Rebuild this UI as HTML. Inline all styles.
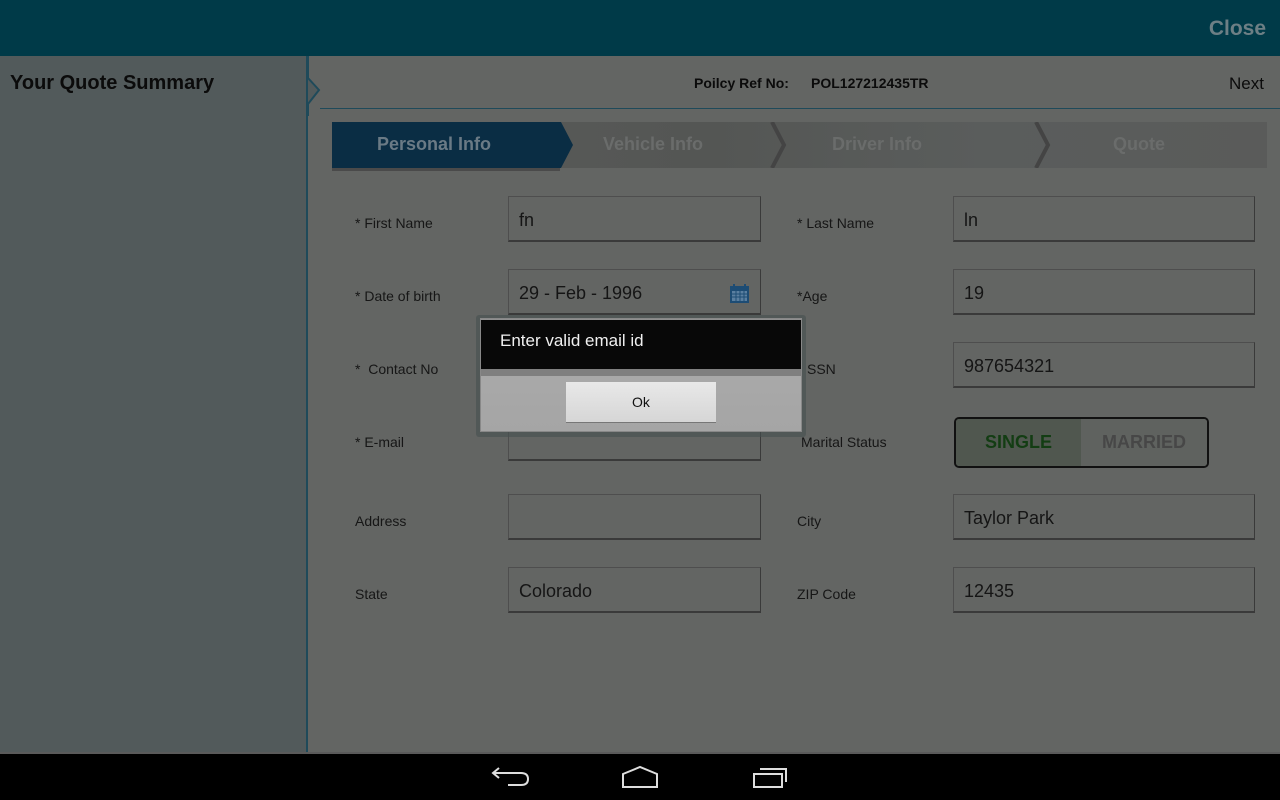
<!DOCTYPE html>
<html><head><style>
*{margin:0;padding:0;box-sizing:border-box}
body{width:1280px;height:800px;position:relative;overflow:hidden;background:#636563;font-family:"Liberation Sans",sans-serif;color:#111}
.a{position:absolute}
.top{left:0;top:0;width:1280px;height:56px;background:#003a48}
.close{right:14px;top:17px;color:#6d7f85;font-weight:bold;font-size:21px}
.left{left:0;top:56px;width:308px;height:696px;background:#525a5b;border-right:2px solid #1f4a5a}
.lbl{font-size:14px;color:#161616}
.in{width:253px;height:46px;border:1px solid #4e4e4e;border-right-color:#3a3a3a;border-bottom:2px solid #3a3a3a;font-size:18px;padding:13px 10px;color:#151515}
.r{width:302px}
.nav{left:0;top:752px;width:1280px;height:48px;background:#000}
</style></head><body>
<div class="a top"></div>
<div class="a close">Close</div>
<div class="a left"></div>
<div class="a" style="left:10px;top:72px;font-size:20px;font-weight:bold;color:#0b0b0b">Your Quote Summary</div>
<svg class="a" style="left:300px;top:56px" width="24" height="60"><path d="M8 0 V22 L19 34 L8 48 V60" fill="#525a5b" stroke="#1f4a5a" stroke-width="2"/></svg>
<div class="a" style="left:320px;top:108px;width:960px;height:1px;background:#1f4a5a"></div>
<div class="a" style="left:694px;top:75px;font-size:14px;font-weight:bold;color:#0b0b0b">Poilcy Ref No:</div>
<div class="a" style="left:811px;top:75px;font-size:14px;font-weight:bold;color:#0b0b0b">POL127212435TR</div>
<div class="a" style="left:1229px;top:74px;font-size:17px;color:#0b0b0b">Next</div>
<div class="a" style="left:332px;top:122px;width:935px;height:46px;background:linear-gradient(90deg,#5a5b5a,#545654 40%,#5a5d5c 70%,#5a5b5a)"></div>
<svg class="a" style="left:332px;top:122px" width="935" height="46">
<path d="M0 0H229L241 23L229 46H0Z" fill="#0a2d44"/>
<path d="M440 0L452 23L440 46" fill="none" stroke="#444" stroke-width="4"/>
<path d="M704 0L716 23L704 46" fill="none" stroke="#444" stroke-width="4"/>
</svg>
<div class="a" style="left:332px;top:168px;width:228px;height:3px;background:#4a4a4a"></div>
<div class="a" style="left:377px;top:134px;font-size:18px;font-weight:bold;color:#6a7a85">Personal Info</div>
<div class="a" style="left:603px;top:134px;font-size:18px;font-weight:bold;color:#6a6c6b">Vehicle Info</div>
<div class="a" style="left:832px;top:134px;font-size:18px;font-weight:bold;color:#6a6c6b">Driver Info</div>
<div class="a" style="left:1113px;top:134px;font-size:18px;font-weight:bold;color:#6a6c6b">Quote</div>

<div class="a lbl" style="left:355px;top:215px">* First Name</div>
<div class="a in" style="left:508px;top:196px">fn</div>
<div class="a lbl" style="left:797px;top:215px">* Last Name</div>
<div class="a in r" style="left:953px;top:196px">ln</div>

<div class="a lbl" style="left:355px;top:288px">* Date of birth</div>
<div class="a in" style="left:508px;top:269px">29 - Feb - 1996</div>
<svg class="a" style="left:729px;top:283px" width="21" height="21"><rect x="1" y="3" width="19" height="17" fill="#1d4c74"/><rect x="3" y="8" width="15" height="10" fill="#5a7fa0"/><path d="M5 1v4M16 1v4" stroke="#1d4c74" stroke-width="2"/><path d="M3 11h15M3 14h15M7 8v10M11 8v10M15 8v10" stroke="#1d4c74"/></svg>
<div class="a lbl" style="left:797px;top:288px">*Age</div>
<div class="a in r" style="left:953px;top:269px">19</div>

<div class="a lbl" style="left:355px;top:361px">*&nbsp; Contact No</div>
<div class="a in" style="left:508px;top:342px">1234567890</div>
<div class="a lbl" style="left:807px;top:361px">SSN</div>
<div class="a in r" style="left:953px;top:342px">987654321</div>

<div class="a lbl" style="left:355px;top:434px">* E-mail</div>
<div class="a in" style="left:508px;top:415px"></div>
<div class="a lbl" style="left:801px;top:434px">Marital Status</div>
<div class="a" style="left:954px;top:417px;width:255px;height:51px;border:2px solid #111;border-radius:5px;overflow:hidden;display:flex">
<div style="width:125px;background:#50574f;color:#133d13;font-weight:bold;font-size:18px;text-align:center;line-height:47px">SINGLE</div>
<div style="flex:1;background:#5f625f;color:#474747;font-weight:bold;font-size:18px;text-align:center;line-height:47px">MARRIED</div></div>

<div class="a lbl" style="left:355px;top:513px">Address</div>
<div class="a in" style="left:508px;top:494px"></div>
<div class="a lbl" style="left:797px;top:513px">City</div>
<div class="a in r" style="left:953px;top:494px">Taylor Park</div>

<div class="a lbl" style="left:355px;top:586px">State</div>
<div class="a in" style="left:508px;top:567px">Colorado</div>
<div class="a lbl" style="left:797px;top:586px">ZIP Code</div>
<div class="a in r" style="left:953px;top:567px">12435</div>

<div class="a" style="left:476px;top:315px;width:330px;height:122px;background:rgba(70,80,80,.6);border-radius:3px"></div>
<div class="a" style="left:480px;top:318px;width:322px;height:114px;border:1px solid #888;background:linear-gradient(#8e8e8e,#aaa 30%,#a5a5a5)"></div>
<div class="a" style="left:481px;top:320px;width:320px;height:49px;background:#080808"></div>
<div class="a" style="left:481px;top:369px;width:320px;height:7px;background:#7f7f7f"></div>
<div class="a" style="left:500px;top:331px;font-size:17px;color:#f0f0f0">Enter valid email id</div>
<div class="a" style="left:566px;top:382px;width:150px;height:41px;background:linear-gradient(#e8e8e8,#d6d6d6);border-bottom:1px solid #777;font-size:14px;text-align:center;line-height:41px;color:#111">Ok</div>

<div class="a nav"></div>
<div class="a" style="left:0;top:752px;width:1280px;height:2px;background:#5a5a5a"></div>
<svg class="a" style="left:490px;top:762px" width="300" height="30">
<path d="M9 6L3 11L9 16M3 11H31Q38 11 38 17Q38 23 31 23H18" fill="none" stroke="#ddd" stroke-width="2"/>
<path d="M133 25V12L150 5L167 12V25Z" fill="none" stroke="#ddd" stroke-width="2"/>
<path d="M264 12H292V25H264Z M270 7H296V20" fill="none" stroke="#ddd" stroke-width="2"/>
</svg>
</body></html>
